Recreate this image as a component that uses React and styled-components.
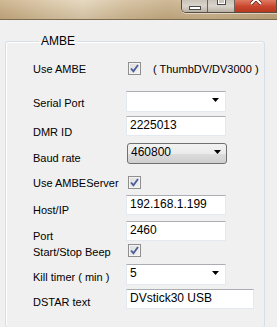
import React from "react";
import styled, { createGlobalStyle } from "styled-components";

const GlobalStyle = createGlobalStyle`
  html, body {
    margin: 0;
    padding: 0;
    background: #f0f0f0;
    height: 100%;
  }
  body {
    font-family: "Liberation Sans", Arial, sans-serif;
    font-size: 11px;
    color: #000;
    overflow: hidden;
  }
`;

const rows = [
    { label: "Use AMBE", kind: "check", gap: 0, h: 13, shift: 0, note: "( ThumbDV/DV3000 )" },
    { label: "Serial Port", kind: "combo", gap: 16, h: 21, shift: 3, value: "" },
    { label: "DMR ID", kind: "text", gap: 4, h: 20, shift: 12, value: "2225013" },
    { label: "Baud rate", kind: "baud", gap: 7, h: 21, shift: 9, value: "460800" },
    { label: "Use AMBEServer", kind: "check", gap: 12, h: 13, shift: 0 },
    { label: "Host/IP", kind: "text", gap: 6, h: 20, shift: 9, value: "192.168.1.199" },
    { label: "Port", kind: "text", gap: 6, h: 20, shift: 9, value: "2460" },
    { label: "Start/Stop Beep", kind: "check", gap: 3, h: 13, shift: 3 },
    { label: "Kill timer ( min )", kind: "combo", gap: 7, h: 21, shift: 4, value: "5" },
    { label: "DSTAR text", kind: "text", gap: 4, h: 20, shift: 6, value: "DVstick30 USB", wide: true },
];

function Arrow() {
    return (
        <svg width="7" height="4" viewBox="0 0 7 4">
            <path d="M0 0 H7 L3.5 4 Z" fill="#000" />
        </svg>
    );
}

function Check() {
    return (
        <CheckBox>
            <svg width="9" height="9" viewBox="0 0 9 9">
                <path
                    d="M1 4.5 L3.4 7.2 L8 1"
                    fill="none"
                    stroke="#4a5d99"
                    strokeWidth="1.8"
                />
            </svg>
        </CheckBox>
    );
}

function Control({ row }) {
    if (row.kind === "check") {
        return (
            <CheckWrap>
                <Check />
                {row.note && <Note>{row.note}</Note>}
            </CheckWrap>
        );
    }
    if (row.kind === "combo") {
        return (
            <Combo>
                <span>{row.value}</span>
                <Arrow />
            </Combo>
        );
    }
    if (row.kind === "baud") {
        return (
            <BaudCombo>
                <span>{row.value}</span>
                <Arrow />
            </BaudCombo>
        );
    }
    return <TextBox $wide={row.wide}>{row.value}</TextBox>;
}

export default function App() {
    return (
        <>
            <GlobalStyle />
            <TitleBar>
                <WinButtons>
                    <MinButton>
                        <MinGlyph />
                    </MinButton>
                    <MaxButton>
                        <MaxGlyph />
                    </MaxButton>
                    <CloseButton>
                        {/* close cross, top half cut by the screen edge */}
                        <svg width="12" height="6" viewBox="0 0 12 6">
                            <path
                                d="M1 -6 L11 4 M11 -6 L1 4"
                                stroke="#5a2015"
                                strokeWidth="3.4"
                            />
                            <path
                                d="M1 -6 L11 4 M11 -6 L1 4"
                                stroke="#fff"
                                strokeWidth="2"
                            />
                        </svg>
                    </CloseButton>
                </WinButtons>
            </TitleBar>
            <Content>
                <Group>
                    <Legend>AMBE</Legend>
                    {rows.map((r) => (
                        <Row key={r.label} $gap={r.gap} $h={r.h}>
                            <Label $shift={r.shift}>{r.label}</Label>
                            <Control row={r} />
                        </Row>
                    ))}
                </Group>
            </Content>
        </>
    );
}

const TitleBar = styled.div`
    height: 19px;
    border-bottom: 1px solid #7d6b4f;
    background:
        linear-gradient(180deg, rgba(255, 255, 255, 0.12) 0%, rgba(120, 90, 50, 0.18) 100%),
        linear-gradient(
            90deg,
            #c9ae86 0%,
            #dac7a6 18%,
            #e3d4b8 30%,
            #d4bf9c 45%,
            #c8b08a 60%,
            #cdb793 75%,
            #c2a880 100%
        );
    display: flex;
    justify-content: flex-end;
    align-items: flex-start;
`;

const WinButtons = styled.div`
    display: flex;
    height: 12px;
    border: 1px solid #5a4e40;
    border-top: none;
    border-radius: 0 0 0 5px;
    overflow: hidden;
    box-shadow: 0 1px 0 rgba(255, 255, 255, 0.5);
`;

const GlassButton = styled.div`
    width: 26px;
    height: 12px;
    display: flex;
    align-items: flex-end;
    justify-content: center;
    background: linear-gradient(180deg, #c9c2b8 0%, #d9d4cd 50%, #b9b0a4 100%);
    border-right: 1px solid #6d6257;
`;

const MinButton = styled(GlassButton)`
    padding-bottom: 2px;
    box-sizing: border-box;
`;

const MinGlyph = styled.div`
    width: 10px;
    height: 2px;
    background: #fff;
    border: 1px solid #4a4a4a;
`;

const MaxButton = styled(GlassButton)`
    align-items: flex-start;
`;

const MaxGlyph = styled.div`
    width: 7px;
    height: 4px;
    border: 1px solid #4a4a4a;
    border-top: none;
    box-shadow: inset 0 -1px 0 #fff, inset 1px 0 0 #fff, inset -1px 0 0 #fff;
`;

const CloseButton = styled.div`
    width: 41px;
    height: 12px;
    background: linear-gradient(180deg, #e07a62 0%, #c9452d 55%, #b8381f 100%);
    display: flex;
    justify-content: center;
    align-items: flex-start;
    overflow: hidden;
`;

const Content = styled.div`
    padding: 14px 12px 0 5px;
`;

const Group = styled.fieldset`
    margin: 0;
    padding: 14px 0 18px 27px;
    border: 1px solid #d5dfe5;
    border-radius: 3px;
    box-shadow: inset 1px 1px 0 #fff;
`;

const Legend = styled.legend`
    font-size: 12px;
    padding: 0 2px;
    margin-left: 6px;
    color: #000;
`;

const Row = styled.div`
    display: flex;
    align-items: center;
    height: ${(p) => p.$h}px;
    margin-top: ${(p) => p.$gap}px;
`;

const Label = styled.div`
    width: 93px;
    flex-shrink: 0;
    font-size: 11px;
    white-space: nowrap;
    padding-top: ${(p) => p.$shift}px;
`;

const CheckWrap = styled.div`
    display: flex;
    align-items: center;
    padding-left: 2px;
`;

const CheckBox = styled.div`
    width: 11px;
    height: 11px;
    border: 1px solid #8f8f8f;
    background: linear-gradient(135deg, #dcdcdc 0%, #f4f4f4 100%);
    box-shadow: inset 0 0 0 1px #f4f4f4;
    display: flex;
    align-items: center;
    justify-content: center;
`;

const Note = styled.span`
    margin-left: 12px;
    font-size: 11px;
`;

const Field = styled.div`
    box-sizing: border-box;
    height: 100%;
    background: #fff;
    border: 1px solid #e3e9ef;
    border-top-color: #abadb3;
    display: flex;
    align-items: center;
    padding: 0 3px 3px;
    font-size: 12px;
`;

const TextBox = styled(Field)`
    width: ${(p) => (p.$wide ? 128 : 100)}px;
`;

const Combo = styled(Field)`
    width: 100px;
    justify-content: space-between;
    padding-right: 6px;
`;

const BaudCombo = styled.div`
    box-sizing: border-box;
    width: 100px;
    height: 100%;
    margin-left: 1px;
    border: 1px solid #707070;
    border-radius: 3px;
    background: linear-gradient(180deg, #f2f2f2 0%, #ebebeb 50%, #dddddd 51%, #cfcfcf 100%);
    display: flex;
    align-items: center;
    justify-content: space-between;
    padding: 0 5px 3px 3px;
    font-size: 12px;
`;
